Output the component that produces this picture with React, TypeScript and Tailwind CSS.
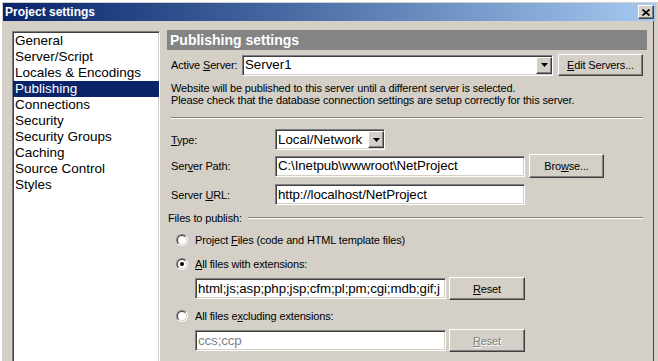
import React from "react";

const sunken =
  "border border-t-[#808080] border-l-[#808080] border-b-white border-r-white shadow-[inset_1px_1px_0_#404040,inset_-1px_-1px_0_#d4d0c8]";
const raised =
  "border border-t-white border-l-white border-b-[#404040] border-r-[#404040] shadow-[inset_-1px_-1px_0_#808080]";
const small = "text-[11px] tracking-[-0.15px] leading-[12px]";

const PAGES = [
  "General",
  "Server/Script",
  "Locales & Encodings",
  "Publishing",
  "Connections",
  "Security",
  "Security Groups",
  "Caching",
  "Source Control",
  "Styles",
];

function Arrow() {
  return (
    <svg width="7" height="4" viewBox="0 0 7 4">
      <path d="M0 0h7L3.5 4z" fill="#000" />
    </svg>
  );
}

function Combo({ value, width }: { value: string; width: string }) {
  return (
    <div className={`${sunken} ${width} h-[21px] bg-white flex items-center`}>
      <span className="flex-1 pl-[2px] text-[13.3px] leading-none whitespace-nowrap overflow-hidden">
        {value}
      </span>
      <span className={`${raised} w-[16px] h-[17px] bg-[#d4d0c8] flex items-center justify-center`}>
        <Arrow />
      </span>
    </div>
  );
}

function Field({ value, width, disabled }: { value: string; width: string; disabled?: boolean }) {
  return (
    <div
      className={`${sunken} ${width} h-[21px] bg-white flex items-center pl-[2px] overflow-hidden whitespace-nowrap text-[13.3px] tracking-[-0.1px] leading-none ${
        disabled ? "text-[#808080]" : "text-black"
      }`}
    >
      {value}
    </div>
  );
}

function Button({
  children,
  width,
  height = "h-[23px]",
  disabled,
}: {
  children: React.ReactNode;
  width: string;
  height?: string;
  disabled?: boolean;
}) {
  return (
    <div
      className={`${raised} ${width} ${height} flex items-center justify-center ${small} ${
        disabled ? "text-[#808080] [text-shadow:1px_1px_0_#fff]" : "text-black"
      }`}
    >
      {children}
    </div>
  );
}

function Radio({ checked }: { checked?: boolean }) {
  return (
    <span className="w-[12px] h-[12px] rounded-full border border-t-[#808080] border-l-[#808080] border-b-white border-r-white bg-[#d4d0c8] flex items-center justify-center">
      <span className="w-[10px] h-[10px] rounded-full border border-t-[#404040] border-l-[#404040] border-b-[#d4d0c8] border-r-[#d4d0c8] bg-white flex items-center justify-center">
        {checked && <span className="w-[4px] h-[4px] rounded-full bg-black" />}
      </span>
    </span>
  );
}

function Etch({ className = "" }: { className?: string }) {
  return <div className={`h-[2px] border-t border-t-[#808080] border-b border-b-white ${className}`} />;
}

export default function App() {
  return (
    <div className="w-[658px] h-[361px] overflow-hidden bg-[#d4d0c8] font-['Liberation_Sans',Arial,sans-serif] text-black shadow-[inset_2px_2px_0_#fff]">
      <div className="pt-[3px] pl-[3px] pr-[2px]">
        <div className="h-[18px] bg-gradient-to-r from-[#0a246a] to-[#a6caf0] flex items-center justify-between pl-[2px] pr-[2px]">
          <span className="text-white font-bold text-[12px] leading-none">Project settings</span>
          <span className={`${raised} w-[16px] h-[14px] bg-[#d4d0c8] flex items-center justify-center`}>
            <svg width="8" height="7" viewBox="0 0 8 7">
              <path d="M0.5 0.5l7 6M7.5 0.5l-7 6" stroke="#000" strokeWidth="1.6" />
            </svg>
          </span>
        </div>
      </div>

      <div className="flex w-[654px] h-[340px] border-r border-r-[#404040]">
        {/* category list */}
        <div className={`${sunken} ml-[12px] mt-[10px] w-[148px] h-[400px] bg-white pt-[1px]`}>
          {PAGES.map((p) => (
            <div
              key={p}
              className={`h-[16px] leading-[16px] pl-[2px] text-[13.5px] whitespace-nowrap ${
                p === "Publishing" ? "bg-[#0a246a] text-white" : ""
              }`}
            >
              {p}
            </div>
          ))}
        </div>

        {/* publishing pane */}
        <div className="ml-[7px] mt-[9px] w-[480px]">
          <div className="h-[20px] bg-[#858485] pl-[3px] flex items-center text-white font-bold text-[14px] leading-none">
            Publishing settings
          </div>

          <div className="px-[4px]">
            <div className="mt-[4px] flex items-center h-[22px]">
              <span className={`w-[71px] ${small}`}>
                Active <u>S</u>erver:
              </span>
              <Combo value="Server1" width="w-[311px]" />
              <div className="ml-[5px]">
                <Button width="w-[85px]" height="h-[22px]">
                  <span>
                    <u>E</u>dit Servers...
                  </span>
                </Button>
              </div>
            </div>

            <p className={`mt-[6px] ${small}`}>
              Website will be published to this server until a different server is selected.
              <br />
              Please check that the database connection settings are setup correctly for this server.
            </p>

            <Etch className="mt-[11px] w-[472px]" />

            <div className="mt-[10px] flex items-center h-[21px]">
              <span className={`w-[104px] ${small}`}>
                <u>T</u>ype:
              </span>
              <Combo value="Local/Network" width="w-[110px]" />
            </div>

            <div className="mt-[4px] flex items-center h-[24px]">
              <span className={`w-[104px] ${small}`}>
                Ser<u>v</u>er Path:
              </span>
              <Field value="C:\Inetpub\wwwroot\NetProject" width="w-[250px]" />
              <div className="ml-[4px]">
                <Button width="w-[75px]" height="h-[24px]">
                  <span>
                    Bro<u>w</u>se...
                  </span>
                </Button>
              </div>
            </div>

            <div className="mt-[6px] flex items-center h-[21px]">
              <span className={`w-[104px] ${small}`}>
                Server <u>U</u>RL:
              </span>
              <Field value="http://localhost/NetProject" width="w-[250px]" />
            </div>
          </div>

          <div className="mt-[7px] flex items-center h-[12px] pl-[1px] pr-[4px]">
            <span className={`${small} w-[80px]`}>Files to publish:</span>
            <Etch className="flex-1" />
          </div>

          <div className="pl-[9px]">
            <div className="mt-[9px] flex items-center h-[14px] gap-[7px]">
              <Radio />
              <span className={small}>
                Project <u>F</u>iles (code and HTML template files)
              </span>
            </div>
            <div className="mt-[10px] flex items-center h-[14px] gap-[7px]">
              <Radio checked />
              <span className={small}>
                <u>A</u>ll files with extensions:
              </span>
            </div>
            <div className="mt-[6px] pl-[19px] flex items-center h-[23px]">
              <Field value="html;js;asp;php;jsp;cfm;pl;pm;cgi;mdb;gif;j" width="w-[251px]" />
              <div className="ml-[3px]">
                <Button width="w-[76px]">
                  <span>
                    <u>R</u>eset
                  </span>
                </Button>
              </div>
            </div>
            <div className="mt-[9px] flex items-center h-[14px] gap-[7px]">
              <Radio />
              <span className={small}>
                All files e<u>x</u>cluding extensions:
              </span>
            </div>
            <div className="mt-[6px] pl-[19px] flex items-center h-[23px]">
              <Field value="ccs;ccp" width="w-[251px]" disabled />
              <div className="ml-[3px]">
                <Button width="w-[76px]" disabled>
                  <span>
                    <u>R</u>eset
                  </span>
                </Button>
              </div>
            </div>
          </div>
        </div>
      </div>
    </div>
  );
}
